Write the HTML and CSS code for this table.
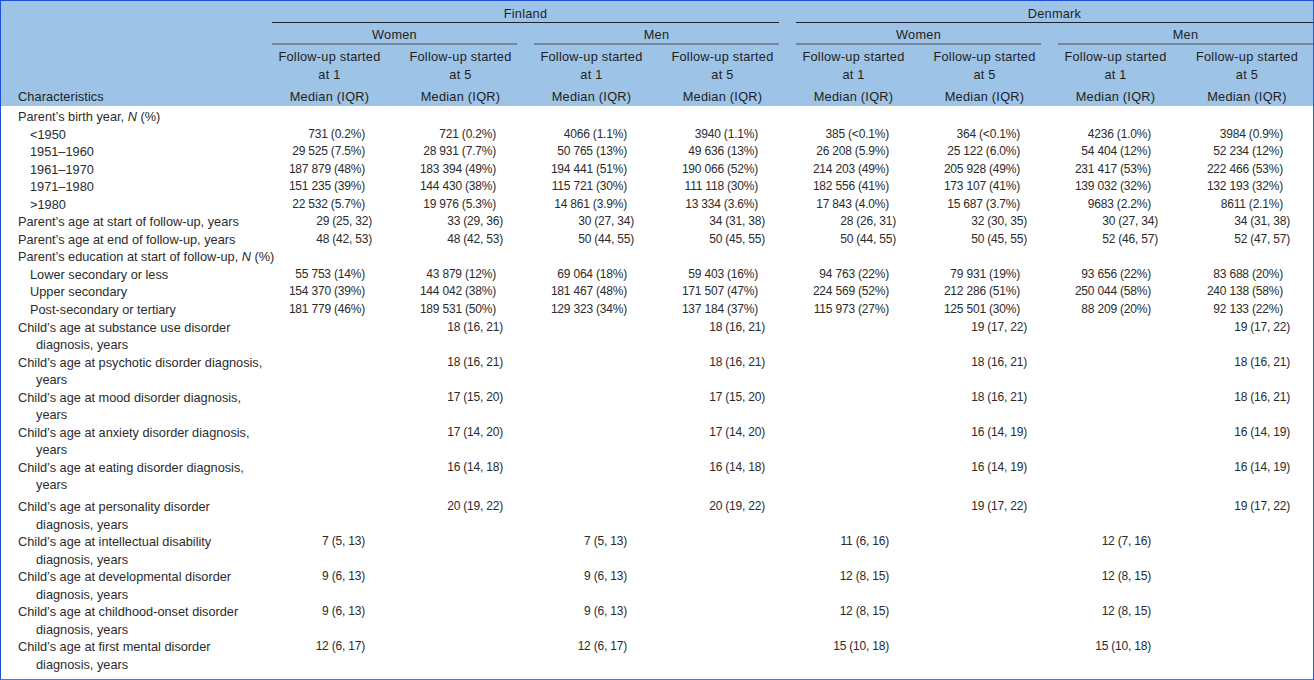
FILE: index.html
```html
<!DOCTYPE html>
<html lang="en">
<head>
<meta charset="utf-8">
<title>Characteristics</title>
<link rel="stylesheet" href="styles.css">
</head>
<body>
<div class="frame">
<table class="tbl">
<colgroup>
<col class="c0"><col class="cd"><col class="cd"><col class="cd"><col class="cd"><col class="cd"><col class="cd"><col class="cd"><col>
</colgroup>
<thead>
<tr class="h1">
<th class="chr" rowspan="4">Characteristics</th>
<th colspan="4"><div class="grp">Finland</div></th>
<th colspan="4"><div class="grp last">Denmark</div></th>
</tr>
<tr class="h2">
<th colspan="2"><div class="sub">Women</div></th>
<th colspan="2"><div class="sub">Men</div></th>
<th colspan="2"><div class="sub">Women</div></th>
<th colspan="2"><div class="sub last">Men</div></th>
</tr>
<tr class="h3">
<th>Follow-up started<br>at 1</th>
<th>Follow-up started<br>at 5</th>
<th>Follow-up started<br>at 1</th>
<th>Follow-up started<br>at 5</th>
<th>Follow-up started<br>at 1</th>
<th>Follow-up started<br>at 5</th>
<th>Follow-up started<br>at 1</th>
<th>Follow-up started<br>at 5</th>
</tr>
<tr class="h4">
<th>Median (IQR)</th><th>Median (IQR)</th><th>Median (IQR)</th><th>Median (IQR)</th>
<th>Median (IQR)</th><th>Median (IQR)</th><th>Median (IQR)</th><th>Median (IQR)</th>
</tr>
</thead>
<tbody>
<tr class="first">
<td class="lab">Parent’s birth year, <i>N</i> (%)</td>
<td></td><td></td><td></td><td></td><td></td><td></td><td></td><td></td>
</tr>
<tr>
<td class="lab sub1">&lt;1950</td>
<td class="v">731 (0.2%)</td><td class="v">721 (0.2%)</td><td class="v">4066 (1.1%)</td><td class="v">3940 (1.1%)</td>
<td class="v">385 (&lt;0.1%)</td><td class="v">364 (&lt;0.1%)</td><td class="v">4236 (1.0%)</td><td class="v">3984 (0.9%)</td>
</tr>
<tr>
<td class="lab sub1">1951–1960</td>
<td class="v">29 525 (7.5%)</td><td class="v">28 931 (7.7%)</td><td class="v">50 765 (13%)</td><td class="v">49 636 (13%)</td>
<td class="v">26 208 (5.9%)</td><td class="v">25 122 (6.0%)</td><td class="v">54 404 (12%)</td><td class="v">52 234 (12%)</td>
</tr>
<tr>
<td class="lab sub1">1961–1970</td>
<td class="v">187 879 (48%)</td><td class="v">183 394 (49%)</td><td class="v">194 441 (51%)</td><td class="v">190 066 (52%)</td>
<td class="v">214 203 (49%)</td><td class="v">205 928 (49%)</td><td class="v">231 417 (53%)</td><td class="v">222 466 (53%)</td>
</tr>
<tr>
<td class="lab sub1">1971–1980</td>
<td class="v">151 235 (39%)</td><td class="v">144 430 (38%)</td><td class="v">115 721 (30%)</td><td class="v">111 118 (30%)</td>
<td class="v">182 556 (41%)</td><td class="v">173 107 (41%)</td><td class="v">139 032 (32%)</td><td class="v">132 193 (32%)</td>
</tr>
<tr>
<td class="lab sub1">&gt;1980</td>
<td class="v">22 532 (5.7%)</td><td class="v">19 976 (5.3%)</td><td class="v">14 861 (3.9%)</td><td class="v">13 334 (3.6%)</td>
<td class="v">17 843 (4.0%)</td><td class="v">15 687 (3.7%)</td><td class="v">9683 (2.2%)</td><td class="v">8611 (2.1%)</td>
</tr>
<tr>
<td class="lab">Parent’s age at start of follow-up, years</td>
<td class="v a">29 (25, 32)</td><td class="v a">33 (29, 36)</td><td class="v a">30 (27, 34)</td><td class="v a">34 (31, 38)</td>
<td class="v a">28 (26, 31)</td><td class="v a">32 (30, 35)</td><td class="v a">30 (27, 34)</td><td class="v a">34 (31, 38)</td>
</tr>
<tr>
<td class="lab">Parent’s age at end of follow-up, years</td>
<td class="v a">48 (42, 53)</td><td class="v a">48 (42, 53)</td><td class="v a">50 (44, 55)</td><td class="v a">50 (45, 55)</td>
<td class="v a">50 (44, 55)</td><td class="v a">50 (45, 55)</td><td class="v a">52 (46, 57)</td><td class="v a">52 (47, 57)</td>
</tr>
<tr>
<td class="lab">Parent’s education at start of follow-up, <i>N</i> (%)</td>
<td></td><td></td><td></td><td></td><td></td><td></td><td></td><td></td>
</tr>
<tr>
<td class="lab sub1">Lower secondary or less</td>
<td class="v">55 753 (14%)</td><td class="v">43 879 (12%)</td><td class="v">69 064 (18%)</td><td class="v">59 403 (16%)</td>
<td class="v">94 763 (22%)</td><td class="v">79 931 (19%)</td><td class="v">93 656 (22%)</td><td class="v">83 688 (20%)</td>
</tr>
<tr>
<td class="lab sub1">Upper secondary</td>
<td class="v">154 370 (39%)</td><td class="v">144 042 (38%)</td><td class="v">181 467 (48%)</td><td class="v">171 507 (47%)</td>
<td class="v">224 569 (52%)</td><td class="v">212 286 (51%)</td><td class="v">250 044 (58%)</td><td class="v">240 138 (58%)</td>
</tr>
<tr>
<td class="lab sub1">Post-secondary or tertiary</td>
<td class="v">181 779 (46%)</td><td class="v">189 531 (50%)</td><td class="v">129 323 (34%)</td><td class="v">137 184 (37%)</td>
<td class="v">115 973 (27%)</td><td class="v">125 501 (30%)</td><td class="v">88 209 (20%)</td><td class="v">92 133 (22%)</td>
</tr>
<tr>
<td class="lab wrap">Child’s age at substance use disorder<br>diagnosis, years</td>
<td></td><td class="v a">18 (16, 21)</td><td></td><td class="v a">18 (16, 21)</td>
<td></td><td class="v a">19 (17, 22)</td><td></td><td class="v a">19 (17, 22)</td>
</tr>
<tr>
<td class="lab wrap">Child’s age at psychotic disorder diagnosis,<br>years</td>
<td></td><td class="v a">18 (16, 21)</td><td></td><td class="v a">18 (16, 21)</td>
<td></td><td class="v a">18 (16, 21)</td><td></td><td class="v a">18 (16, 21)</td>
</tr>
<tr>
<td class="lab wrap">Child’s age at mood disorder diagnosis,<br>years</td>
<td></td><td class="v a">17 (15, 20)</td><td></td><td class="v a">17 (15, 20)</td>
<td></td><td class="v a">18 (16, 21)</td><td></td><td class="v a">18 (16, 21)</td>
</tr>
<tr>
<td class="lab wrap">Child’s age at anxiety disorder diagnosis,<br>years</td>
<td></td><td class="v a">17 (14, 20)</td><td></td><td class="v a">17 (14, 20)</td>
<td></td><td class="v a">16 (14, 19)</td><td></td><td class="v a">16 (14, 19)</td>
</tr>
<tr>
<td class="lab wrap">Child’s age at eating disorder diagnosis,<br>years</td>
<td></td><td class="v a">16 (14, 18)</td><td></td><td class="v a">16 (14, 18)</td>
<td></td><td class="v a">16 (14, 19)</td><td></td><td class="v a">16 (14, 19)</td>
</tr>
<tr class="gap">
<td class="lab wrap">Child’s age at personality disorder<br>diagnosis, years</td>
<td></td><td class="v a">20 (19, 22)</td><td></td><td class="v a">20 (19, 22)</td>
<td></td><td class="v a">19 (17, 22)</td><td></td><td class="v a">19 (17, 22)</td>
</tr>
<tr>
<td class="lab wrap">Child’s age at intellectual disability<br>diagnosis, years</td>
<td class="v">7 (5, 13)</td><td></td><td class="v">7 (5, 13)</td><td></td>
<td class="v">11 (6, 16)</td><td></td><td class="v">12 (7, 16)</td><td></td>
</tr>
<tr>
<td class="lab wrap">Child’s age at developmental disorder<br>diagnosis, years</td>
<td class="v">9 (6, 13)</td><td></td><td class="v">9 (6, 13)</td><td></td>
<td class="v">12 (8, 15)</td><td></td><td class="v">12 (8, 15)</td><td></td>
</tr>
<tr>
<td class="lab wrap">Child’s age at childhood-onset disorder<br>diagnosis, years</td>
<td class="v">9 (6, 13)</td><td></td><td class="v">9 (6, 13)</td><td></td>
<td class="v">12 (8, 15)</td><td></td><td class="v">12 (8, 15)</td><td></td>
</tr>
<tr>
<td class="lab wrap">Child’s age at first mental disorder<br>diagnosis, years</td>
<td class="v">12 (6, 17)</td><td></td><td class="v">12 (6, 17)</td><td></td>
<td class="v">15 (10, 18)</td><td></td><td class="v">15 (10, 18)</td><td></td>
</tr>
</tbody>
</table>
</div>
</body>
</html>
```
FILE: styles.css
```css
html, body {
  margin: 0;
  padding: 0;
  background: #ffffff;
}

body {
  font-family: "Liberation Sans", Arial, sans-serif;
  font-size: 12.75px;
  color: #2b2b2b;
}

.frame {
  width: 1314px;
  height: 680px;
  box-sizing: border-box;
  border: 1px solid #1f4fd6;
  border-right-color: #2d5ad2;
  border-bottom-color: #5676c6;
  overflow: hidden;
}

.tbl {
  width: 1312px;
  border-collapse: collapse;
  table-layout: fixed;
}

.c0 { width: 263px; }
.cd { width: 131px; }

thead {
  background: #9dc3e6;
}

th {
  padding: 0;
  font-weight: normal;
  text-align: center;
  vertical-align: top;
  letter-spacing: 0.25px;
  color: #1f1f1f;
}

.h1 th { line-height: 17px; }

.grp {
  margin: 0 9px 0 8px;
  padding-top: 4px;
  border-bottom: 1px solid #1b2430;
}

.grp.last { margin-right: 0; }

.h2 th { line-height: 17px; }

.sub {
  margin: 0 9px 0 8px;
  padding-top: 3px;
  border-bottom: 2px solid #75879e;
}

.sub.last { margin-right: 0; }

.h3 th {
  line-height: 18px;
  padding-top: 3px;
}

.h4 th {
  line-height: 18px;
  padding-top: 4px;
}

th.chr {
  text-align: left;
  vertical-align: bottom;
  padding: 0 0 0 17px;
  line-height: 18px;
  letter-spacing: 0.1px;
}

td {
  padding: 0;
  line-height: 17.55px;
  vertical-align: top;
  white-space: nowrap;
}

tr.first td { padding-top: 2px; }
tr.gap td { padding-top: 4px; }

.lab {
  padding-left: 17px;
  text-align: left;
}

.lab.sub1 { padding-left: 29px; }

.lab.wrap {
  padding-left: 35px;
  text-indent: -18px;
}

.v {
  text-align: right;
  padding-right: 30px;
  font-size: 12px;
  letter-spacing: -0.2px;
}

.v.a { padding-right: 23px; }
```
